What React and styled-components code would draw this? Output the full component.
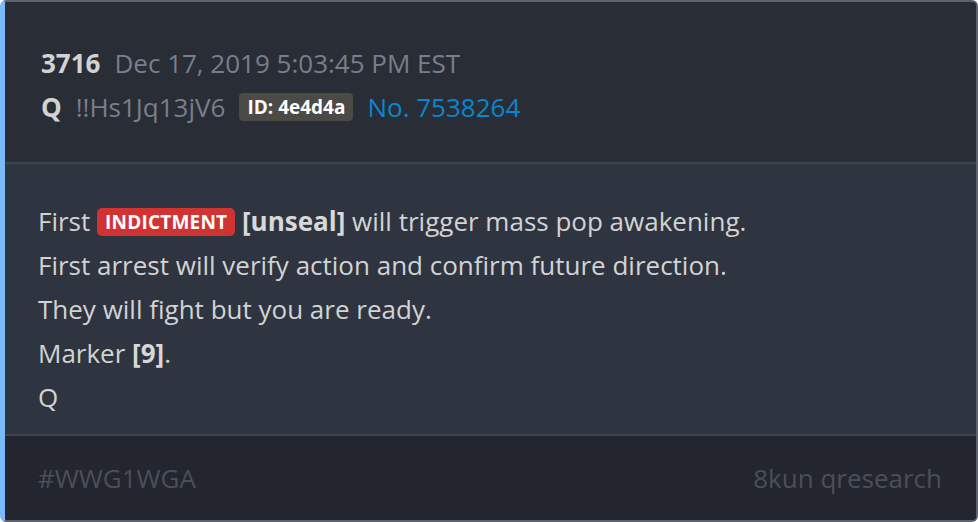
import React from "react";
import styled, { createGlobalStyle } from "styled-components";

const Global = createGlobalStyle`
  html, body { margin: 0; padding: 0; background: #ffffff; }
  * { box-sizing: border-box; }
  body { font-family: "Open Sans", "Noto Sans", sans-serif; }
`;

const Card = styled.article`
  width: 978px;
  height: 522px;
  display: flex;
  flex-direction: column;
  border: 2px solid #5d626d;
  border-left: 5px solid #7bb9f8;
  border-radius: 6px;
  overflow: hidden;
  background: #2f3540;
`;

const Header = styled.header`
  background: #292d36;
  height: 162px;
  padding: 43px 36px 0 36px;
  border-bottom: 2px solid #3d424c;
  display: flex;
  flex-direction: column;
  gap: 8px;
`;

const Row = styled.div`
  display: flex;
  align-items: center;
  gap: 14px;
  font-size: 26px;
  line-height: 36px;
  white-space: nowrap;
`;

const Strong = styled.span`
  font-weight: 700;
  color: #d2d2d2;
`;

const Muted = styled.span`
  color: #7a7e8b;
`;

const IdBadge = styled.span`
  background: #4b4a47;
  color: #ffffff;
  font-weight: 700;
  font-size: 19px;
  line-height: 28px;
  padding: 0 8px;
  border-radius: 4px;
`;

const PostLink = styled.a`
  color: #0a86cc;
  text-decoration: none;
`;

const Body = styled.section`
  flex: 1;
  padding: 35px 33px 0 33px;
  border-bottom: 2px solid #3f444e;
  color: #d3d3d3;
  font-size: 26px;
  line-height: 44px;
`;

const Line = styled.p`
  margin: 0;
  white-space: nowrap;
`;

const Bold = styled.b`
  font-weight: 700;
  color: #d8d8d8;
`;

const Tag = styled.span`
  display: inline-block;
  background: #d13333;
  color: #ffffff;
  font-weight: 700;
  font-size: 19px;
  line-height: 28px;
  padding: 0 8px;
  border-radius: 5px;
  vertical-align: 2px;
  letter-spacing: 0.2px;
`;

const Footer = styled.footer`
  height: 84px;
  background: #23262e;
  display: flex;
  align-items: center;
  justify-content: space-between;
  padding: 0 34px 0 33px;
  color: #4a4f5a;
  font-size: 26px;
`;

export default function App() {
  return (
    <>
      <Global />
      <Card>
        <Header>
          <Row>
            <Strong>3716</Strong>
            <Muted>Dec 17, 2019 5:03:45 PM EST</Muted>
          </Row>
          <Row>
            <Strong>Q</Strong>
            <Muted>!!Hs1Jq13jV6</Muted>
            <IdBadge>ID: 4e4d4a</IdBadge>
            <PostLink href="#">No. 7538264</PostLink>
          </Row>
        </Header>
        <Body>
          <Line>
            First <Tag>INDICTMENT</Tag> <Bold>[unseal]</Bold> will trigger mass pop awakening.
          </Line>
          <Line>First arrest will verify action and confirm future direction.</Line>
          <Line>They will fight but you are ready.</Line>
          <Line>
            Marker <Bold>[9]</Bold>.
          </Line>
          <Line>Q</Line>
        </Body>
        <Footer>
          <span>#WWG1WGA</span>
          <span>8kun qresearch</span>
        </Footer>
      </Card>
    </>
  );
}
